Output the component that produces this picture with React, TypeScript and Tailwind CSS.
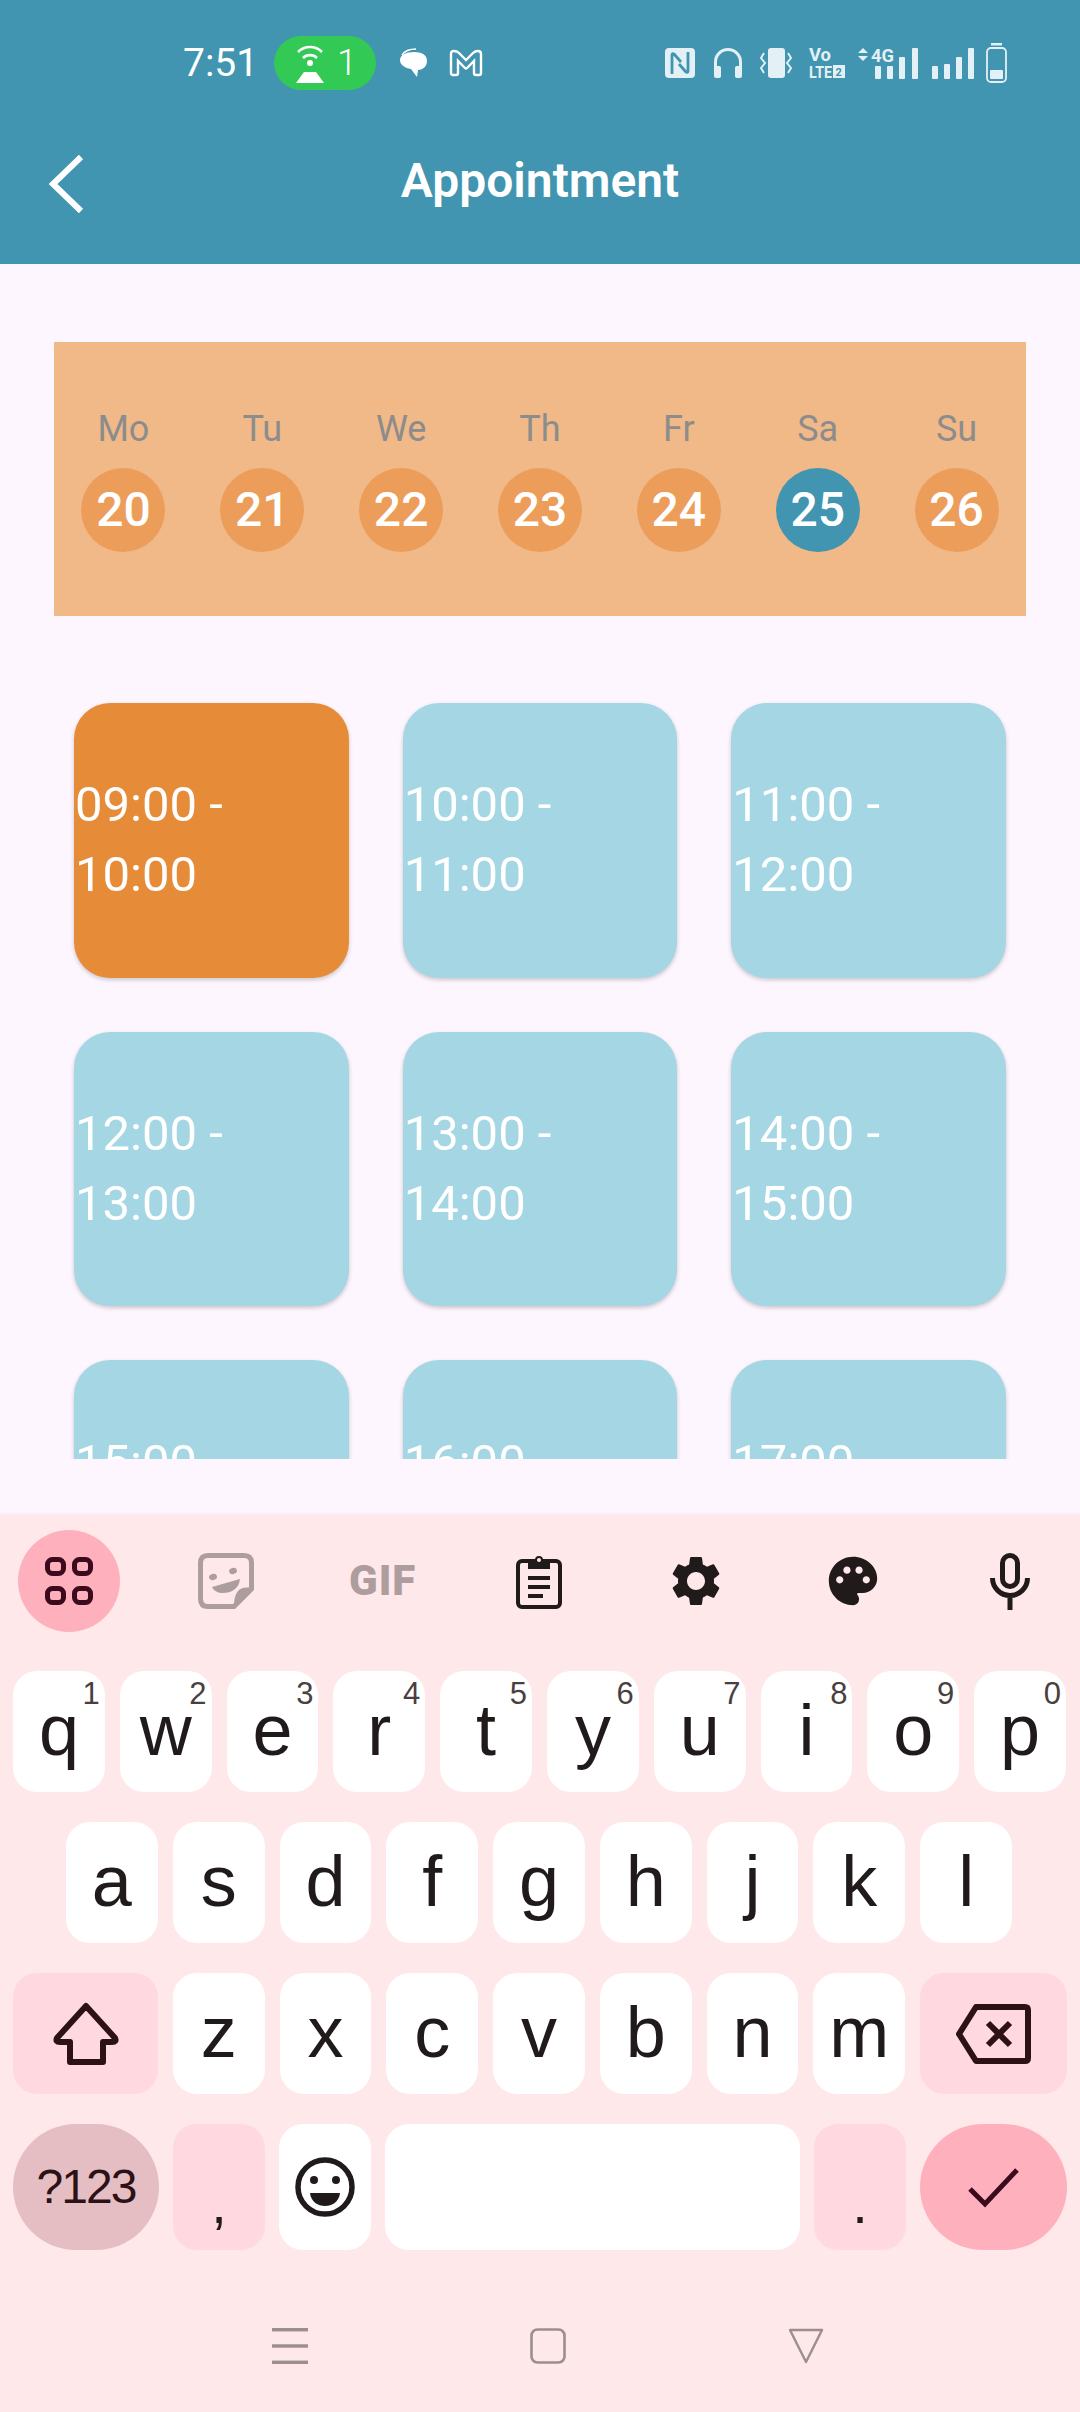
import { MdPalette, MdSettings } from "react-icons/md";

const DAYS = [
  ["Mo", "20"], ["Tu", "21"], ["We", "22"], ["Th", "23"], ["Fr", "24"], ["Sa", "25"], ["Su", "26"],
];
const SLOTS = [
  "09:00 - 10:00", "10:00 - 11:00", "11:00 - 12:00",
  "12:00 - 13:00", "13:00 - 14:00", "14:00 - 15:00",
  "15:00 - 16:00", "16:00 - 17:00", "17:00 - 18:00",
];
const TOP_ROW = [["q", "1"], ["w", "2"], ["e", "3"], ["r", "4"], ["t", "5"], ["y", "6"], ["u", "7"], ["i", "8"], ["o", "9"], ["p", "0"]];
const HOME_ROW = ["a", "s", "d", "f", "g", "h", "j", "k", "l"];
const BOTTOM_ROW = ["z", "x", "c", "v", "b", "n", "m"];

const SYS = "#e3f0f5";

function Nfc() {
  return (
    <svg width="30" height="30" viewBox="0 0 30 30">
      <rect width="30" height="30" rx="4" fill={SYS} />
      <path d="M7 26V7q0-2 2-1l7 8M23 4v19q0 2-2 1l-7-8" fill="none" stroke="#4195b0" strokeWidth="2.8" />
    </svg>
  );
}

function Headphones() {
  return (
    <svg width="30" height="30" viewBox="0 0 30 30">
      <path d="M2.5 20v-6a12.5 12.5 0 0 1 25 0v6" fill="none" stroke={SYS} strokeWidth="3" />
      <rect x="1" y="18" width="7" height="12" rx="2" fill={SYS} />
      <rect x="22" y="18" width="7" height="12" rx="2" fill={SYS} />
    </svg>
  );
}

function Vibrate() {
  return (
    <svg width="32" height="30" viewBox="0 0 32 30">
      <rect x="8" y="0" width="17" height="30" rx="3" fill={SYS} />
      <path d="M4 5l-3 5 4 5-4 5 3 5M28 5l3 5-4 5 4 5-3 5" fill="none" stroke={SYS} strokeWidth="2" />
    </svg>
  );
}

function VoLte() {
  return (
    <svg className="overflow-visible" width="36" height="32" viewBox="0 0 36 32">
      <text x="0" y="14" fontFamily="Roboto, sans-serif" fontWeight="700" fontSize="18" textLength="22" lengthAdjust="spacingAndGlyphs" fill={SYS}>Vo</text>
      <text x="0" y="31" fontFamily="Roboto, sans-serif" fontWeight="700" fontSize="16" textLength="23" lengthAdjust="spacingAndGlyphs" fill={SYS}>LTE</text>
      <rect x="24" y="18" width="12" height="13" fill={SYS} />
      <text x="26.5" y="29" fontFamily="Roboto, sans-serif" fontWeight="700" fontSize="11" fill="#4195b0">2</text>
    </svg>
  );
}

function Signal4G() {
  return (
    <svg className="overflow-visible" width="60" height="32" viewBox="0 0 60 32">
      <path d="M5 1l5 5H0zM5 14l5-5H0z" fill={SYS} />
      <text x="13" y="15" fontFamily="Roboto, sans-serif" fontWeight="700" fontSize="19" textLength="23" lengthAdjust="spacingAndGlyphs" fill={SYS}>4G</text>
      <rect x="17" y="19" width="6" height="13" rx="1" fill={SYS} />
      <rect x="29" y="19" width="6" height="13" rx="1" fill={SYS} />
      <rect x="41" y="10" width="6" height="22" rx="1" fill={SYS} />
      <rect x="54" y="1" width="6" height="31" rx="1" fill={SYS} />
    </svg>
  );
}

function Signal() {
  return (
    <svg width="43" height="32" viewBox="0 0 43 32">
      <rect x="0" y="19" width="6" height="13" rx="1" fill={SYS} />
      <rect x="12" y="17" width="6" height="15" rx="1" fill={SYS} />
      <rect x="24" y="10" width="6" height="22" rx="1" fill={SYS} />
      <rect x="36" y="1" width="6" height="31" rx="1" fill={SYS} />
    </svg>
  );
}

function Battery() {
  return (
    <svg width="21" height="40" viewBox="0 0 21 40">
      <rect x="5" y="0" width="11" height="2.5" fill={SYS} />
      <rect x="1" y="5" width="19" height="34" rx="4" fill="none" stroke={SYS} strokeWidth="1.8" />
      <rect x="4" y="27" width="13" height="9" rx="1" fill={SYS} />
    </svg>
  );
}

function HotspotGlyph() {
  return (
    <svg width="30" height="42" viewBox="0 0 30 42">
      <path d="M3 10a17 17 0 0 1 24 0M8 16a10 10 0 0 1 14 0" fill="none" stroke="#fff" strokeWidth="2.6" />
      <circle cx="15" cy="21" r="3" fill="#fff" />
      <path d="M9 30h12l8 11H1z" fill="#fff" />
    </svg>
  );
}

function ChatGlyph() {
  return (
    <svg width="30" height="30" viewBox="0 0 30 30">
      <path d="M3 7Q7 1 17 1" fill="none" stroke="#fff" strokeWidth="1.5" />
      <path d="M15 4c8 0 13 3 13 9s-5 9-9 9l-1 7-6-8C6 20 1 17 1 12s6-8 14-8z" fill="#fff" />
    </svg>
  );
}

function MailGlyph() {
  return (
    <svg width="34" height="28" viewBox="0 0 34 28">
      <path d="M2 5Q2 2 5 2t5 2l7 7 7-7q2-2 5-2t3 3v19q0 2-2 2h-3q-2 0-2-2V12l-7 7q-1 1-2 0l-7-7v12q0 2-2 2H4q-2 0-2-2z" fill="none" stroke="#fff" strokeWidth="2.4" />
    </svg>
  );
}

function AppsIcon() {
  return (
    <svg width="48" height="48" viewBox="0 0 48 48" fill="none" stroke="#3b0a1c" strokeWidth="5">
      <rect x="2.5" y="2.5" width="16" height="14" rx="5" />
      <rect x="29.5" y="2.5" width="16" height="14" rx="5" />
      <rect x="2.5" y="31.5" width="16" height="14" rx="5" />
      <rect x="29.5" y="31.5" width="16" height="14" rx="5" />
    </svg>
  );
}

function StickerIcon() {
  return (
    <svg width="56" height="56" viewBox="0 0 56 56">
      <path d="M10 2.5h36q7.5 0 7.5 7.5v26L36 53.5H10q-7.5 0-7.5-7.5V10q0-7.5 7.5-7.5z" fill="none" stroke="#ae9d9e" strokeWidth="5" />
      <path d="M53 35c-10-2-17 2-17 18z" fill="#ae9d9e" />
      <ellipse cx="15" cy="24" rx="4" ry="3" fill="#ae9d9e" transform="rotate(-15 15 24)" />
      <ellipse cx="35" cy="18" rx="4" ry="3" fill="#ae9d9e" transform="rotate(-15 35 18)" />
      <path d="M14 34l28-8c-1 10-9 14-17 14-5 0-9-2-11-6z" fill="#ae9d9e" />
    </svg>
  );
}

function ClipboardIcon() {
  return (
    <svg width="46" height="56" viewBox="0 0 46 56">
      <rect x="2" y="8" width="42" height="46" rx="4" fill="none" stroke="#201a1b" strokeWidth="4" />
      <path d="M12 7h7a4 4 0 0 1 8 0h7v9H12z" fill="#201a1b" />
      <circle cx="23" cy="7" r="2" fill="#fee8ea" />
      <rect x="12" y="23" width="22" height="4" fill="#201a1b" />
      <rect x="12" y="32" width="22" height="4" fill="#201a1b" />
      <rect x="12" y="41" width="15" height="4" fill="#201a1b" />
    </svg>
  );
}

function MicIcon() {
  return (
    <svg width="40" height="57" viewBox="0 0 40 57" fill="none" stroke="#201a1b" strokeWidth="5">
      <rect x="12.5" y="2.5" width="15" height="31" rx="7.5" />
      <path d="M2.5 25a17.5 17.5 0 0 0 35 0M20 42v15" />
    </svg>
  );
}

function ShiftIcon() {
  return (
    <svg width="66" height="64" viewBox="0 0 66 64">
      <path d="M33 4L62 36q2 4-3 4H50v20H17V40H7q-5 0-3-4z" fill="none" stroke="#2c1116" strokeWidth="6" strokeLinejoin="round" />
    </svg>
  );
}

function BackspaceIcon() {
  return (
    <svg width="75" height="60" viewBox="0 0 75 60" fill="none" stroke="#2c1116" strokeWidth="6">
      <path d="M20 3h49q3 0 3 3v48q0 3-3 3H20L3 30z" strokeLinejoin="round" />
      <path d="M32 19l22 22M54 19L32 41" />
    </svg>
  );
}

function EmojiIcon() {
  return (
    <svg width="60" height="60" viewBox="0 0 60 60">
      <circle cx="30" cy="30" r="27" fill="none" stroke="#201a1b" strokeWidth="5.5" />
      <circle cx="19" cy="23" r="4" fill="#201a1b" />
      <circle cx="41" cy="23" r="4" fill="#201a1b" />
      <path d="M15 36h30c-1 9-8 13-15 13s-14-4-15-13z" fill="#201a1b" />
    </svg>
  );
}

function CheckIcon() {
  return (
    <svg width="51" height="41" viewBox="0 0 51 41">
      <path d="M2 22l15 15L49 3" fill="none" stroke="#3b0a1c" strokeWidth="5" />
    </svg>
  );
}

function Key({ children, className }: { children?: React.ReactNode; className: string }) {
  return <div className={`relative flex h-full items-center justify-center rounded-[24px] ${className}`}>{children}</div>;
}

function LetterKey({ label, hint }: { label: string; hint?: string }) {
  return (
    <Key className="min-w-0 flex-1 bg-white">
      <span className="pb-[4px] text-[72px] leading-none text-[#201a1b]">{label}</span>
      {hint && <span className="absolute right-[5px] top-[7px] text-[31px] leading-[31px] text-[#4a3f40]">{hint}</span>}
    </Key>
  );
}

export default function App() {
  return (
    <div className="flex h-[2412px] w-[1080px] flex-col overflow-hidden bg-[#fdf6fe] font-['Roboto',sans-serif]">
      <header className="h-[264px] shrink-0 bg-[#4195b0] pt-[36px] text-white">
        <div className="flex h-[54px] items-center justify-between pl-[183px] pr-[73px]">
          <div className="flex items-center">
            <span className="w-[71px] text-[39px] leading-none">7:51</span>
            <div className="ml-[20px] flex h-[54px] w-[102px] items-center rounded-full bg-[#33c955] pl-[21px]">
              <HotspotGlyph />
              <span className="ml-[12px] text-[36px] font-light leading-none">1</span>
            </div>
            <div className="ml-[23px]"><ChatGlyph /></div>
            <div className="ml-[20px]"><MailGlyph /></div>
          </div>
          <div className="flex items-center">
            <Nfc />
            <div className="ml-[18px]"><Headphones /></div>
            <div className="ml-[17px]"><Vibrate /></div>
            <div className="ml-[17px]"><VoLte /></div>
            <div className="ml-[13px]"><Signal4G /></div>
            <div className="ml-[14px]"><Signal /></div>
            <div className="ml-[11px]"><Battery /></div>
          </div>
        </div>
        <div className="mt-[36px] grid h-[110px] grid-cols-[1fr_auto_1fr] items-center">
          <svg className="ml-[48px] mt-[6px]" width="36" height="60" viewBox="0 0 36 60">
            <path d="M33 3L5 30l28 27" fill="none" stroke="#fff" strokeWidth="6" />
          </svg>
          <h1 className="text-[48px] font-semibold leading-none">Appointment</h1>
        </div>
      </header>

      <section className="mx-[54px] mt-[78px] flex h-[274px] shrink-0 items-center bg-[#f1b888]">
        <div className="grid w-full grid-cols-7">
          {DAYS.map(([day, date]) => (
            <div key={day} className="flex flex-col items-center">
              <span className="text-[36px] leading-[44px] text-[#8c8c8c]">{day}</span>
              <span
                className={`mt-[17px] flex h-[84px] w-[84px] items-center justify-center rounded-full text-[48px] font-medium leading-none text-white ${
                  date === "25" ? "bg-[#4195b0]" : "bg-[#ec9d5a]"
                }`}
              >
                {date}
              </span>
            </div>
          ))}
        </div>
      </section>

      <main className="h-[843px] shrink-0 overflow-hidden px-[74px] pt-[87px]">
        <div className="grid grid-cols-3 gap-[54px]">
          {SLOTS.map((slot, i) => (
            <div
              key={slot}
              className={`flex aspect-square items-center rounded-[36px] px-[1px] text-[49px] leading-[70px] text-white shadow-[0_2px_4px_rgba(0,0,0,0.2)] ${
                i === 0 ? "bg-[#e68c38]" : "bg-[#a4d6e3]"
              }`}
            >
              {slot}
            </div>
          ))}
        </div>
      </main>

      <div className="h-[56px] shrink-0" />

      <section className="flex h-[897px] shrink-0 flex-col bg-[#fee8ea] font-['Liberation_Sans',sans-serif] shadow-[0_-1px_3px_rgba(0,0,0,0.06)]">
        <div className="mt-[15px] flex items-center justify-between pl-[18px] pr-[19px]">
          <div className="flex h-[102px] w-[102px] items-center justify-center rounded-full bg-[#ffb0bd]"><AppsIcon /></div>
          <div className="flex w-[102px] justify-center"><StickerIcon /></div>
          <div className="flex w-[102px] justify-center font-['Roboto',sans-serif] text-[42px] font-black leading-none tracking-[1px] text-[#ae9d9e]">GIF</div>
          <div className="flex w-[102px] justify-center"><ClipboardIcon /></div>
          <div className="flex w-[102px] justify-center"><MdSettings size={60} color="#201a1b" /></div>
          <div className="flex w-[102px] justify-center"><MdPalette size={58} color="#201a1b" /></div>
          <div className="flex w-[102px] justify-center"><MicIcon /></div>
        </div>

        <div className="mt-[39px] flex flex-col gap-[30px]">
          <div className="flex h-[121px] gap-[15px] pl-[13px] pr-[14px]">
            {TOP_ROW.map(([k, n]) => <LetterKey key={k} label={k} hint={n} />)}
          </div>
          <div className="flex h-[121px] gap-[15px] pl-[66px] pr-[68px]">
            {HOME_ROW.map((k) => <LetterKey key={k} label={k} />)}
          </div>
          <div className="flex h-[121px] gap-[15px] px-[13px]">
            <Key className="w-[145px] shrink-0 bg-[#ffd9df]"><ShiftIcon /></Key>
            {BOTTOM_ROW.map((k) => <LetterKey key={k} label={k} />)}
            <Key className="w-[147px] shrink-0 bg-[#ffd9df]"><BackspaceIcon /></Key>
          </div>
          <div className="flex h-[126px] gap-[14px] px-[13px]">
            <Key className="w-[146px] shrink-0 !rounded-full bg-[#e5bec3]">
              <span className="text-[48px] leading-none tracking-[-2px] text-[#2c1116]">?123</span>
            </Key>
            <Key className="w-[92px] shrink-0 bg-[#ffd9df]">
              <span className="pt-[34px] text-[56px] leading-none text-[#201a1b]">,</span>
            </Key>
            <Key className="w-[92px] shrink-0 bg-white"><EmojiIcon /></Key>
            <Key className="min-w-0 flex-1 bg-white" />
            <Key className="w-[92px] shrink-0 bg-[#ffd9df]">
              <span className="pt-[34px] text-[56px] leading-none text-[#201a1b]">.</span>
            </Key>
            <Key className="w-[147px] shrink-0 !rounded-full bg-[#ffb0bd]"><CheckIcon /></Key>
          </div>
        </div>

        <nav className="mt-[78px] flex items-center justify-center gap-[222px] pl-[16px]">
          <svg width="36" height="36" viewBox="0 0 36 36" fill="#9c8d8e">
            <rect y="0" width="36" height="3.4" />
            <rect y="16.3" width="36" height="3.4" />
            <rect y="32.6" width="36" height="3.4" />
          </svg>
          <svg width="36" height="36" viewBox="0 0 36 36">
            <rect x="1.5" y="1.5" width="33" height="33" rx="6" fill="none" stroke="#9c8d8e" strokeWidth="2.6" />
          </svg>
          <svg width="36" height="36" viewBox="0 0 36 36">
            <path d="M2 2h32L18 34z" fill="none" stroke="#9c8d8e" strokeWidth="2.4" strokeLinejoin="round" />
          </svg>
        </nav>
      </section>
    </div>
  );
}
